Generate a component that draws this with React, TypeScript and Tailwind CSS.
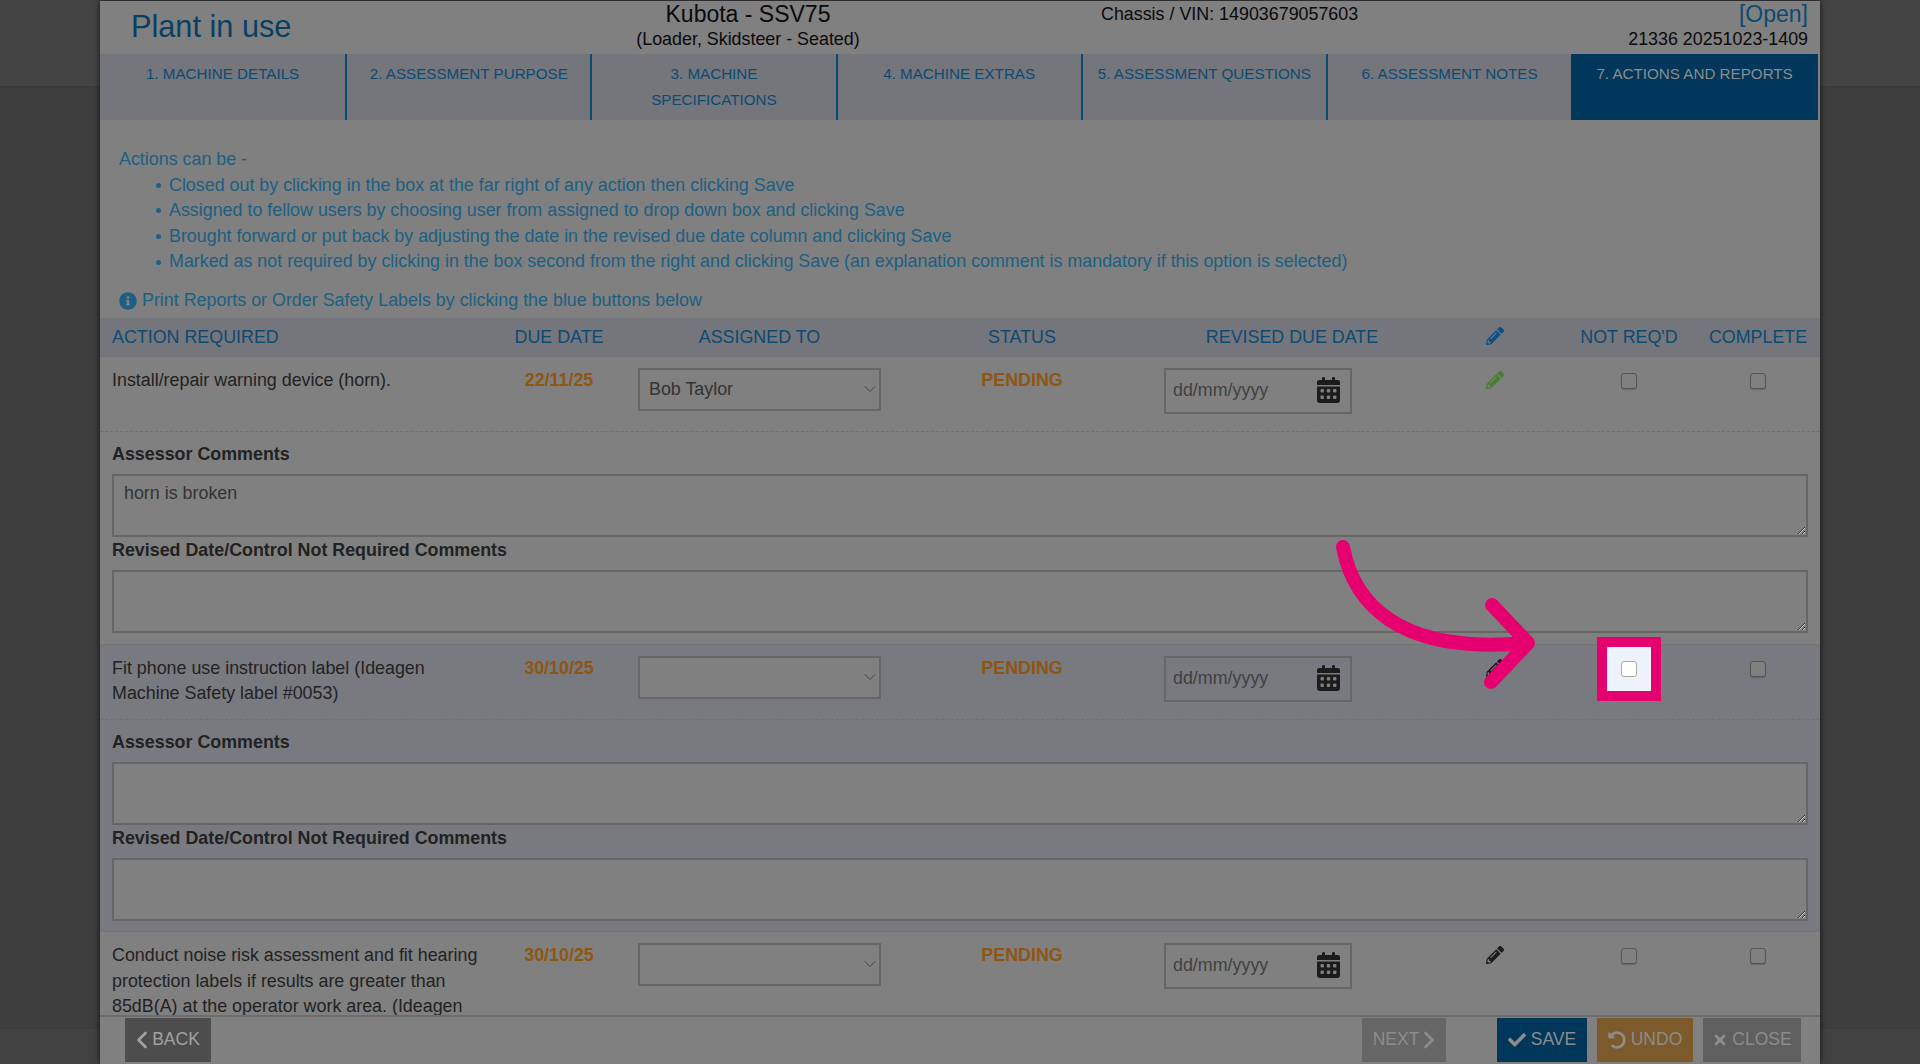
import { ChevronDown, ChevronLeft, ChevronRight } from "lucide-react";
import { FaCheck, FaInfoCircle, FaPencilAlt, FaTimes, FaUndoAlt } from "react-icons/fa";

const TABS = [
  "1. MACHINE DETAILS",
  "2. ASSESSMENT PURPOSE",
  "3. MACHINE SPECIFICATIONS",
  "4. MACHINE EXTRAS",
  "5. ASSESSMENT QUESTIONS",
  "6. ASSESSMENT NOTES",
  "7. ACTIONS AND REPORTS",
];

const NOTES = [
  "Closed out by clicking in the box at the far right of any action then clicking Save",
  "Assigned to fellow users by choosing user from assigned to drop down box and clicking Save",
  "Brought forward or put back by adjusting the date in the revised due date column and clicking Save",
  "Marked as not required by clicking in the box second from the right and clicking Save (an explanation comment is mandatory if this option is selected)",
];

const ACTIONS = [
  {
    title: "Install/repair warning device (horn).",
    due: "22/11/25",
    assigned: "Bob Taylor",
    comment: "horn is broken",
    pencil: "text-[#47802c]",
    alt: false,
  },
  {
    title: "Fit phone use instruction label (Ideagen Machine Safety label #0053)",
    due: "30/10/25",
    assigned: "",
    comment: "",
    pencil: "text-[#1c1c1c]",
    alt: true,
  },
  {
    title:
      "Conduct noise risk assessment and fit hearing protection labels if results are greater than 85dB(A) at the operator work area. (Ideagen Machine Safety label #0012)",
    due: "30/10/25",
    assigned: "",
    comment: "",
    pencil: "text-[#1c1c1c]",
    alt: false,
  },
];

const COLS = "grid grid-cols-[370px_154px_247px_278px_262px_144px_124px_117px]";

function CalendarIcon() {
  return (
    <svg viewBox="0 0 23 26" className="w-[23px] h-[26px] mb-[2px] fill-[#1c1c1c]">
      <rect x="5" y="0" width="3" height="6" rx="1.2" />
      <rect x="15" y="0" width="3" height="6" rx="1.2" />
      <path d="M2 3h19a2 2 0 0 1 2 2v3H0V5a2 2 0 0 1 2-2zM0 9.500h23V23a3 3 0 0 1-3 3H3a3 3 0 0 1-3-3z" />
      <g className="fill-[#808080]">
        <rect x="3.500" y="12" width="3.400" height="3.400" rx="1" />
        <rect x="9.800" y="12" width="3.400" height="3.400" rx="1" />
        <rect x="16" y="12" width="3.400" height="3.400" rx="1" />
        <rect x="3.500" y="18.500" width="3.400" height="3.400" rx="1" />
        <rect x="9.800" y="18.500" width="3.400" height="3.400" rx="1" />
        <rect x="16" y="18.500" width="3.400" height="3.400" rx="1" />
      </g>
    </svg>
  );
}

function Checkbox() {
  return (
    <input
      type="checkbox"
      className="appearance-none w-4 h-4 rounded-[3px] border border-[#555] bg-[#808080] shadow-[0_1px_1px_rgba(0,0,0,0.2)]"
    />
  );
}

function CommentBox({ label, value }: { label: string; value: string }) {
  return (
    <>
      <div className="font-bold text-[#222] h-[26px] pt-[1px]">{label}</div>
      <textarea
        defaultValue={value}
        className="block w-full h-[63px] mt-[7px] border-2 border-[#666] bg-[#808080] px-[10px] pt-[5px] text-[#333] outline-none"
      />
    </>
  );
}

function ActionRow({ action }: { action: (typeof ACTIONS)[number] }) {
  return (
    <div className={`shrink-0 border-t border-[#747474] ${action.alt ? "bg-[#787a7f]" : "bg-[#808080]"}`}>
      <div className="min-h-[74px] px-3">
        <div className={`${COLS} pt-[11px]`}>
          <div className="text-[#222] pb-[12px]">{action.title}</div>
          <div className="text-center font-bold text-[#8f5512]">{action.due}</div>
          <div className="relative px-[2px]">
            <select
              defaultValue={action.assigned}
              className="appearance-none w-full h-[43px] border-2 border-[#666] bg-[#808080] pl-[9px] pt-[1px] text-[#333] outline-none"
            >
              <option value=""></option>
              <option value="Bob Taylor">Bob Taylor</option>
            </select>
            <ChevronDown className="absolute right-[3px] top-[11px] w-5 h-5 text-[#444]" strokeWidth={1.2} />
          </div>
          <div className="text-center font-bold text-[#8f5512]">PENDING</div>
          <div className="pl-[3px]">
            <div className="flex items-center justify-between w-[188px] h-[46px] border-2 border-[#666] pl-[7px] pr-[10px]">
              <input
                type="text"
                placeholder="dd/mm/yyyy"
                className="w-[110px] bg-transparent outline-none placeholder:text-[#404040]"
              />
              <CalendarIcon />
            </div>
          </div>
          <div className="flex justify-center pt-[3px]">
            <FaPencilAlt className={`w-[18px] h-[18px] ${action.pencil}`} />
          </div>
          <div className="flex justify-center pt-[5px]">
            <Checkbox />
          </div>
          <div className="flex justify-center pt-[5px] pl-[17px]">
            <Checkbox />
          </div>
        </div>
      </div>
      <div className="border-t border-dashed border-[#707070] px-3 pt-[9px] pb-[10.500px]">
        <CommentBox label="Assessor Comments" value={action.comment} />
        <CommentBox label="Revised Date/Control Not Required Comments" value="" />
      </div>
    </div>
  );
}

function FooterButton({
  className,
  children,
}: {
  className: string;
  children: React.ReactNode;
}) {
  return (
    <button className={`flex items-center justify-center h-11 text-[17.500px] ${className}`}>
      {children}
    </button>
  );
}

export default function App() {
  return (
    <div className="relative h-[1064px] w-[1920px] overflow-hidden font-['Liberation_Sans',Arial,sans-serif] text-[17.880px] leading-[25.600px] bg-[#3e3e3e]">
      {/* page behind the modal */}
      <div className="flex flex-col h-full">
        <div className="h-[87px] bg-[#444] border-b border-[#3a3a3a]"></div>
        <div className="flex-1"></div>
        <div className="h-9 bg-[#424242] border-t border-[#3a3a3a]"></div>
      </div>

      <div className="absolute left-[100px] top-[1px] w-[1720px] h-[1063px] flex flex-col bg-[#808080] shadow-[0_0_6px_rgba(0,0,0,0.8)]">
        {/* title block */}
        <div className="flex h-[53px] shrink-0 text-[#0a0a0a]">
          <div className="w-[400px] pl-[31px] pb-[1px] flex items-center text-[30.700px] text-[#083f63]">Plant in use</div>
          <div className="w-[496px] text-center">
            <div className="text-[23px] pt-[1px] leading-[25px]">Kubota - SSV75</div>
            <div>(Loader, Skidsteer - Seated)</div>
          </div>
          <div className="flex-1 pl-[105px] pt-[1px]">Chassis / VIN: 14903679057603</div>
          <div className="pr-3 text-right">
            <div className="text-[23px] pt-[1px] leading-[25px] text-[#0c4a72]">[Open]</div>
            <div>21336 20251023-1409</div>
          </div>
        </div>

        {/* tabs */}
        <div className="grid grid-cols-[repeat(6,245.200px)_1fr] h-[66px] w-[1718px] shrink-0">
          {TABS.map((tab, i) => (
            <div
              key={tab}
              className={`px-[14px] pt-[7px] text-center text-[15.200px] ${
                i === 6 ? "bg-[#00375a] text-[#8c8c8c]" : "bg-[#74767b] text-[#0c4a72]"
              } ${i > 0 && i < 6 ? "border-l-2 border-[#0c4a72]" : ""}`}
            >
              {tab}
            </div>
          ))}
        </div>

        {/* scrolling content */}
        <div className="flex-1 min-h-0 overflow-hidden flex flex-col">
          <div className="shrink-0 h-[198px] pt-[27px] pl-[19px] text-[#1c5f82]">
            <div>Actions can be -</div>
            <ul className="pl-[37px]">
              {NOTES.map((note) => (
                <li key={note} className="flex items-center">
                  <span className="w-[5px] h-[5px] mr-[8px] rounded-full bg-[#1c5f82]"></span>
                  {note}
                </li>
              ))}
            </ul>
            <div className="flex items-center gap-[5px] mt-[13px]">
              <FaInfoCircle className="w-[18px] h-[18px]" />
              <span>Print Reports or Order Safety Labels by clicking the blue buttons below</span>
            </div>
          </div>

          <div className={`${COLS} shrink-0 h-[38px] items-center px-3 pt-[1px] bg-[#74767b] text-[#0c4a72]`}>
            <div>ACTION REQUIRED</div>
            <div className="text-center">DUE DATE</div>
            <div className="text-center">ASSIGNED TO</div>
            <div className="text-center">STATUS</div>
            <div className="text-center">REVISED DUE DATE</div>
            <div className="flex justify-center pb-[3px]">
              <FaPencilAlt className="w-[18px] h-[18px] text-[#0d4f85]" />
            </div>
            <div className="text-center">NOT REQ'D</div>
            <div className="text-center pl-[17px]">COMPLETE</div>
          </div>

          {ACTIONS.map((action) => (
            <ActionRow key={action.title} action={action} />
          ))}
        </div>

        {/* footer buttons */}
        <div className="flex items-center h-[49px] shrink-0 border-t-2 border-[#6c6c6c] bg-[#808080] pl-[25px] pr-[19px] pb-[1px]">
          <FooterButton className="w-[86px] bg-[#4d4d4d] text-[#a0a0a0]">
            <ChevronLeft className="w-7 h-7 -mx-[8px]" strokeWidth={2.400} />
            <span className="ml-[4px]">BACK</span>
          </FooterButton>
          <div className="flex-1"></div>
          <FooterButton className="w-[84px] bg-[#666] text-[#8c8c8c]">
            <span className="mr-[4px]">NEXT</span>
            <ChevronRight className="w-7 h-7 -mx-[8px]" strokeWidth={2.400} />
          </FooterButton>
          <FooterButton className="w-[90px] ml-[51px] gap-[5px] bg-[#00375a] text-[#8c8c8c]">
            <FaCheck className="w-[18px] h-[18px]" />
            SAVE
          </FooterButton>
          <FooterButton className="w-[96px] ml-[10px] gap-[5px] bg-[#7c5a2b] text-[#8c8c8c]">
            <FaUndoAlt className="w-[18px] h-[18px]" />
            UNDO
          </FooterButton>
          <FooterButton className="w-[98px] ml-[10px] gap-[4px] bg-[#5f5f5f] text-[#8c8c8c]">
            <FaTimes className="w-[16px] h-[16px]" />
            CLOSE
          </FooterButton>
        </div>
      </div>

      {/* highlighted checkbox from the guide */}
      <div className="absolute left-[1597px] top-[637px] w-16 h-16 flex items-center justify-center border-[10px] border-[#e6006f] bg-[#eef2fa]">
        <input
          type="checkbox"
          className="appearance-none w-4 h-4 rounded-[3px] border border-[#aaa] bg-white"
        />
      </div>

      {/* arrow pointing at it */}
      <svg className="absolute left-[1320px] top-[530px] w-[230px] h-[170px]" viewBox="0 0 230 170" fill="none">
        <path
          d="M23 17C33 70 75 125 205 113M172 75L208 113L171 152"
          stroke="#e6006f"
          strokeWidth="14"
          strokeLinecap="round"
          strokeLinejoin="round"
        />
      </svg>
    </div>
  );
}
